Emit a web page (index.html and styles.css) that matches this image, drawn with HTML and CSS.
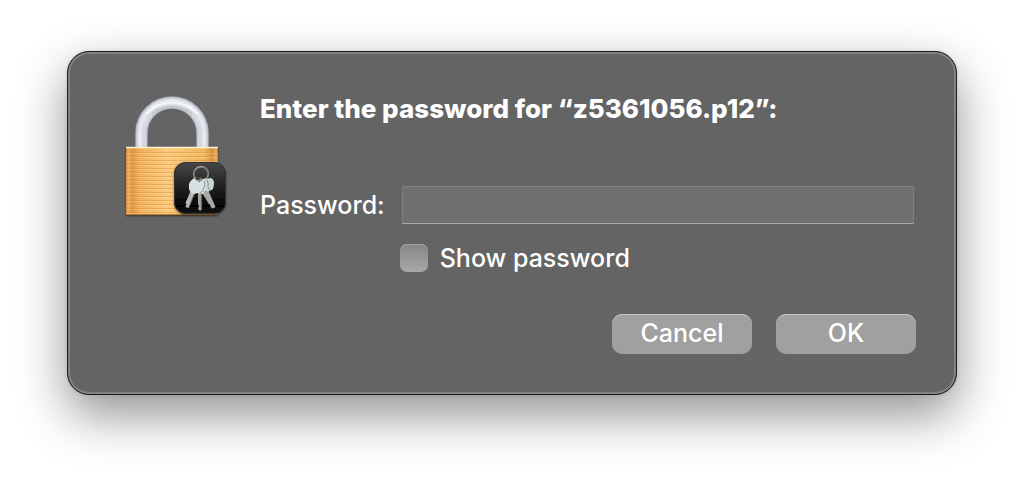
FILE: index.html
```html
<!DOCTYPE html>
<html lang="en">
<head>
<meta charset="utf-8">
<meta name="viewport" content="width=device-width, initial-scale=1">
<title>Enter password</title>
<link rel="stylesheet" href="styles.css">
</head>
<body>
<main class="dialog" role="dialog" aria-labelledby="dialog-title">
  <svg class="lock" viewBox="0 0 108 128" width="108" height="128" aria-hidden="true">
    <defs>
      <linearGradient id="brass" x1="0" x2="1" y1="0" y2="0">
        <stop offset="0" stop-color="#c07a2c"/>
        <stop offset=".02" stop-color="#eeb058"/>
        <stop offset=".07" stop-color="#dd9440"/>
        <stop offset=".15" stop-color="#efb25c"/>
        <stop offset=".45" stop-color="#fbcb7f"/>
        <stop offset=".85" stop-color="#f2b661"/>
        <stop offset=".94" stop-color="#d98f3c"/>
        <stop offset=".98" stop-color="#eeb058"/>
        <stop offset="1" stop-color="#b87426"/>
      </linearGradient>
      <linearGradient id="app" x1="0" x2="0" y1="0" y2="1">
        <stop offset="0" stop-color="#474747"/>
        <stop offset=".85" stop-color="#050505"/>
        <stop offset="1" stop-color="#151515"/>
      </linearGradient>
      <pattern id="lines" width="8" height="4" patternUnits="userSpaceOnUse">
        <path d="M0 2.5H8" stroke="#d9913b" stroke-width="1" opacity=".5"/>
        <path d="M0 3.5H8" stroke="#ffdc9c" stroke-width="1" opacity=".3"/>
      </pattern>
      <filter id="soft" x="-20%" y="-20%" width="140%" height="150%">
        <feDropShadow dx="0" dy="1" stdDeviation="1" flood-color="#000" flood-opacity=".45"/>
      </filter>
    </defs>
    <g fill="none">
      <path d="M19.500 56V39a30.500 30.500 0 0 1 61 0v17" stroke="#a3a9b5" stroke-width="12.500"/>
      <path d="M19.500 56V39a30.500 30.500 0 0 1 61 0v17" stroke="#c3c8d2" stroke-width="11"/>
      <path d="M19.500 56V39a30.500 30.500 0 0 1 61 0v17" stroke="#d6d9e1" stroke-width="8.500"/>
      <path d="M18 56V39a32 32 0 0 1 64 0v17" stroke="#e6e8ed" stroke-width="4"/>
      <path d="M30 20q9-7 20-7t20 7" stroke="#c0c4cb" stroke-width="2"/>
      <path d="M24 20q10-11 26-11t26 11" stroke="#fff" stroke-width="2.5" opacity=".6"/>
    </g>
    <g filter="url(#soft)">
      <rect x="4" y="53" width="92" height="68" rx="1" fill="url(#brass)"/>
      <rect x="4" y="56" width="92" height="64" fill="url(#lines)"/>
      <path d="M4 53.5H96" stroke="#fff0d0" stroke-width="1.5"/>
      <path d="M4 120.5H96" stroke="#b87528"/>
    </g>
    <g filter="url(#soft)">
      <rect x="52" y="68" width="52" height="52" rx="12" fill="url(#app)"/>
      <rect x="52.5" y="68.5" width="51" height="51" rx="11.5" fill="none" stroke="#303030"/>
    </g>
    <circle cx="79" cy="80" r="7.3" fill="none" stroke="#85817c" stroke-width="1.8"/>
    <path d="M73 76a7.3 7.3 0 0 1 8-3" fill="none" stroke="#b8b5b0" stroke-width=".8"/>
    <path d="M84 97l3 1 6.500 15-2.500 1.500-2-1-1-3-1.500-1-6-10z" fill="#aaa9a5"/>
    <path d="M80 86q3-3 5-1l3-1q3 0 4 4 0 4 -1 7l-5 3-5-2z" fill="#cbd6d6"/>
    <path d="M76 98h3l1 17-2 2-2-2 1-3-1-2z" fill="#a9a6a0"/>
    <path d="M79.500 99v16" stroke="#66625d" stroke-width="1.200"/>
    <path d="M69 96l4 2-6.500 16-3-1 1-3-1-1z" fill="#bbb9b3"/>
    <path d="M73 98l-6 15" stroke="#77736b" stroke-width="1"/>
    <path d="M70 85q5-2 9 0l3 1q3 4 1 7l1 3-3 4-5-1-4 1q-5-2-5-6-1-6 4-9z" fill="#d5e0e0"/>
    <path d="M82 87q2 3 0 6 0 4-4 6M85 86q2 3 1 7l2 4" fill="none" stroke="#7e8888" stroke-width=".9"/>
    <path d="M73 85l4 3 3-2-2-3-4 0z" fill="#46423c"/>
    <path d="M74.500 86q3 2 5-2" fill="none" stroke="#aaa49b" stroke-width="1.200"/>
  </svg>
  <form class="form">
    <h1 class="title" id="dialog-title">Enter the password for “z5361056.p12”:</h1>
    <div class="fields">
      <label class="label" for="password">Password:</label>
      <input class="password" id="password" type="password">
      <div class="option">
        <input class="check" id="show" type="checkbox">
        <label class="label" for="show">Show password</label>
      </div>
    </div>
    <div class="actions">
      <button class="button" type="button">Cancel</button>
      <button class="button" type="submit">OK</button>
    </div>
  </form>
</main>
</body>
</html>
```
FILE: styles.css
```css
* {
  box-sizing: border-box;
}

body {
  margin: 0;
  padding: 51px 67px 80px;
  background: #fff;
  color: #fff;
  font-family: Inter, "Liberation Sans", sans-serif;
  font-size: 25px;
  font-weight: 500;
  line-height: 32px;
}

.dialog {
  display: flex;
  align-items: flex-start;
  gap: 30px;
  padding: 41px 40px 40px 54px;
  border: 1px solid #1c1c1c;
  border-radius: 22px;
  background: #646464;
  box-shadow:
    inset 0 0 0 2px #828282,
    0 0 4px rgba(0, 0, 0, 0.1),
    0 20px 50px rgba(0, 0, 0, 0.43);
}

.lock {
  flex: none;
  margin-top: 1px;
}

.form {
  flex: 1;
  min-width: 0;
}

.title {
  margin: 0 0 61px;
  font-size: 26px;
  font-weight: 800;
  line-height: 32px;
}

.fields {
  display: grid;
  grid-template-columns: max-content 1fr;
  align-items: center;
  gap: 20px 17px;
  padding-right: 2px;
}

.password {
  width: 100%;
  height: 38px;
  padding: 0 8px;
  border: 1px solid #808080;
  border-bottom-color: #a8a8a8;
  border-radius: 0;
  outline: none;
  background: #707070;
  color: #fff;
  font: inherit;
}

.option {
  display: flex;
  grid-column: 2;
  align-items: center;
  gap: 12px;
  height: 28px;
}

.check {
  width: 28px;
  height: 28px;
  margin: 0 0 0 -2px;
  border-radius: 7px;
  appearance: none;
  background: linear-gradient(#868686, #a8a8a8);
  box-shadow: inset 0 1px 0 #a4a4a4;
}

.actions {
  display: flex;
  justify-content: flex-end;
  gap: 24px;
  margin-top: 42px;
}

.button {
  width: 140px;
  height: 40px;
  padding: 0 0 2px;
  border: 0;
  border-radius: 10px;
  background: #a0a0a0;
  box-shadow: inset 0 1px 0 #c4c4c4;
  color: #fff;
  font: inherit;
}
```
